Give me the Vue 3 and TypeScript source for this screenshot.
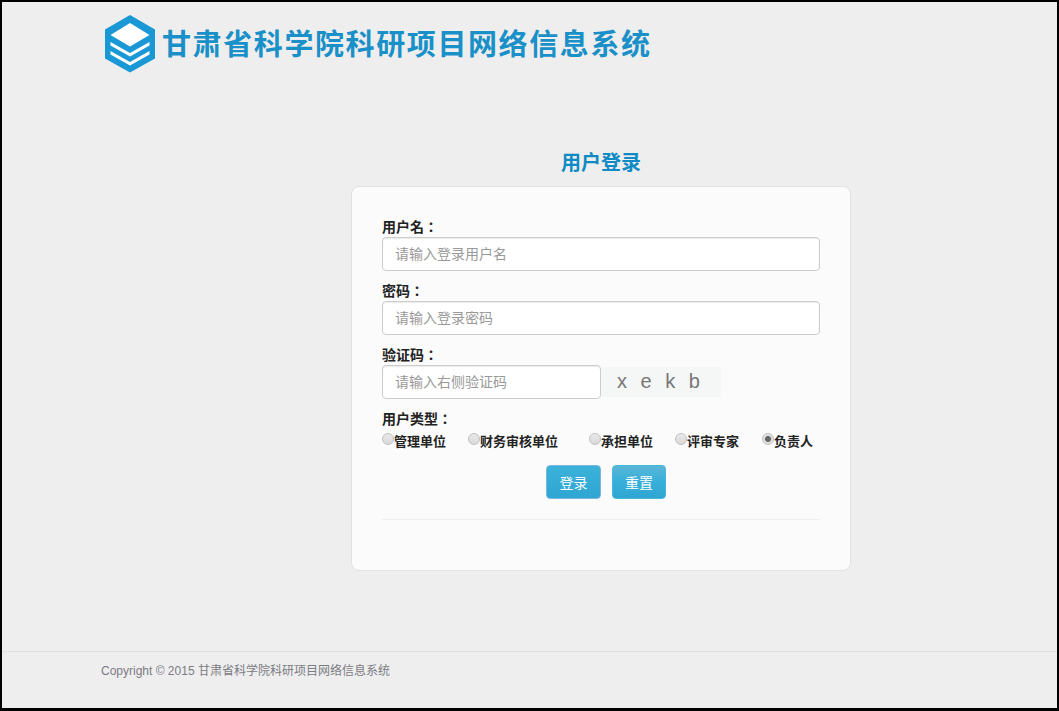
<script setup lang="ts">
interface UserType { label: string; checked: boolean }
const userTypes: UserType[] = [
  { label: '管理单位', checked: false },
  { label: '财务审核单位', checked: false },
  { label: '承担单位', checked: false },
  { label: '评审专家', checked: false },
  { label: '负责人', checked: true },
]
</script>

<template>
  <div class="page">
    <header class="header">
      <svg class="logo" width="50" height="58" viewBox="0 0 50 58" aria-hidden="true">
        <path fill="#1a98d5" d="M25 0 50 14.500V43.500L25 57.500 0 43.500V14.500Z" />
        <path fill="#fff" d="M25 8 44.500 20 25 31.500 5.500 20Z" />
        <path fill="#fff" d="M5.500 27 25 38 44.500 27V30.500L25 41.500 5.500 30.500Z" />
        <path fill="#fff" d="M5.500 36 25 47 44.500 36V39.500L25 50.500 5.500 39.500Z" />
      </svg>
      <h1 class="brand">甘肃省科学院科研项目网络信息系统</h1>
    </header>

    <main class="main">
      <h2 class="title">用户登录</h2>
      <form class="card" @submit.prevent>
        <label class="field-label" for="username">用户名：</label>
        <input id="username" class="input" type="text" placeholder="请输入登录用户名" />

        <label class="field-label" for="password">密码：</label>
        <input id="password" class="input" type="password" placeholder="请输入登录密码" />

        <label class="field-label" for="captcha">验证码：</label>
        <div class="captcha-row">
          <input id="captcha" class="input input-short" type="text" placeholder="请输入右侧验证码" />
          <div class="captcha">x e k b</div>
        </div>

        <div class="field-label">用户类型：</div>
        <div class="types">
          <label v-for="t in userTypes" :key="t.label" class="type">
            <input class="radio" type="radio" name="userType" :checked="t.checked" />
            <span>{{ t.label }}</span>
          </label>
        </div>

        <div class="actions">
          <button class="btn btn-primary" type="submit">登录</button>
          <button class="btn" type="reset">重置</button>
        </div>
        <hr class="divider" />
      </form>
    </main>

    <footer class="footer">Copyright © 2015 甘肃省科学院科研项目网络信息系统</footer>
  </div>
</template>

<style>
html, body { margin: 0; padding: 0; background: #eee; }
</style>

<style scoped>
.page {
  box-sizing: border-box;
  width: 1059px;
  height: 711px;
  border: 2px solid #000;
  border-bottom-width: 3px;
  background: #eee;
  display: flex;
  flex-direction: column;
  font-family: "Liberation Sans", "Noto Sans CJK SC", sans-serif;
  color: #222;
  overflow: hidden;
}
.header {
  display: flex;
  align-items: center;
  height: 58px;
  padding: 13px 0 0 103px;
  gap: 7px;
}
.logo { flex: none; }
.brand {
  margin: -5px 0 0;
  font-family: "Noto Sans CJK SC", sans-serif;
  font-size: 29px;
  line-height: 40px;
  font-weight: 700;
  letter-spacing: 1.6px;
  color: #1a90c8;
  white-space: nowrap;
}
.main {
  flex: 1;
  display: flex;
  flex-direction: column;
  align-items: center;
  padding: 75px 0 0 143px;
}
.title {
  margin: 0 0 10px;
  font-size: 20px;
  line-height: 28px;
  height: 28px;
  font-weight: 700;
  color: #0e8ac4;
  font-family: "Noto Sans CJK SC", sans-serif;
}
.card {
  box-sizing: border-box;
  width: 500px;
  height: 385px;
  padding: 30px;
  background: #fbfbfb;
  border: 1px solid #e1e1e1;
  border-radius: 8px;
  display: flex;
  flex-direction: column;
}
.field-label {
  display: block;
  font-family: "Noto Sans CJK TC", sans-serif;
  font-size: 14px;
  line-height: 18px;
  padding-bottom: 2px;
  font-weight: 700;
  color: #222;
}
.input {
  box-sizing: border-box;
  display: block;
  width: 438px;
  height: 34px;
  margin: 0 0 10px;
  padding: 0 12px;
  border: 1px solid #ccc;
  border-radius: 4px;
  background: #fff;
  font: 14px "Liberation Sans", "Noto Sans CJK SC", sans-serif;
  color: #555;
  box-shadow: inset 0 1px 1px rgba(0, 0, 0, 0.075);
}
.input::placeholder { color: #999; opacity: 1; }
.input-short { width: 219px; flex: none; }
.captcha-row { display: flex; align-items: flex-start; }
.captcha {
  box-sizing: border-box;
  width: 120px;
  height: 30px;
  margin-top: 2px;
  padding-left: 16px;
  background: #f5f6f6;
  font-size: 20px;
  line-height: 28px;
  letter-spacing: 4px;
  color: #777;
  white-space: nowrap;
}
.types {
  display: grid;
  grid-template-columns: 86px 121px 86px 87px auto;
  margin-top: 3px;
  height: 20px;
}
.type {
  display: flex;
  align-items: flex-start;
  font-size: 13px;
  line-height: 20px;
  font-weight: 700;
  color: #222;
  white-space: nowrap;
}
.radio {
  appearance: none;
  box-sizing: border-box;
  flex: none;
  width: 12px;
  height: 12px;
  margin: 1px 0 0;
  border: 1px solid #c0c0c4;
  border-radius: 50%;
  background: linear-gradient(#e8e8e8, #dadada);
}
.radio:checked {
  background: radial-gradient(circle, #666 0 2.6px, #e0e0e0 3.4px);
}
.actions {
  display: flex;
  justify-content: center;
  gap: 11px;
  margin-top: 13px;
  padding-left: 10px;
}
.btn {
  box-sizing: border-box;
  width: 54px;
  height: 34px;
  padding: 0;
  border: 1px solid #46b8da;
  border-radius: 4px;
  background: linear-gradient(#5bb5d9, #39b0d8 45%, #2ea6d3);
  color: #fff;
  font: 14px "Liberation Sans", "Noto Sans CJK SC", sans-serif;
}
.btn-primary {
  width: 55px;
  border-color: #7fb4dc;
  background: linear-gradient(#3ab2d9, #2fa6d3);
}
.divider {
  width: 100%;
  margin: 20px 0 0;
  border: 0;
  border-top: 1px solid #eee;
}
.footer {
  box-sizing: border-box;
  height: 57px;
  padding: 10px 0 0 99px;
  border-top: 1px solid #e0e0e0;
  font-size: 12px;
  line-height: 18px;
  color: #7c7c84;
}
</style>
